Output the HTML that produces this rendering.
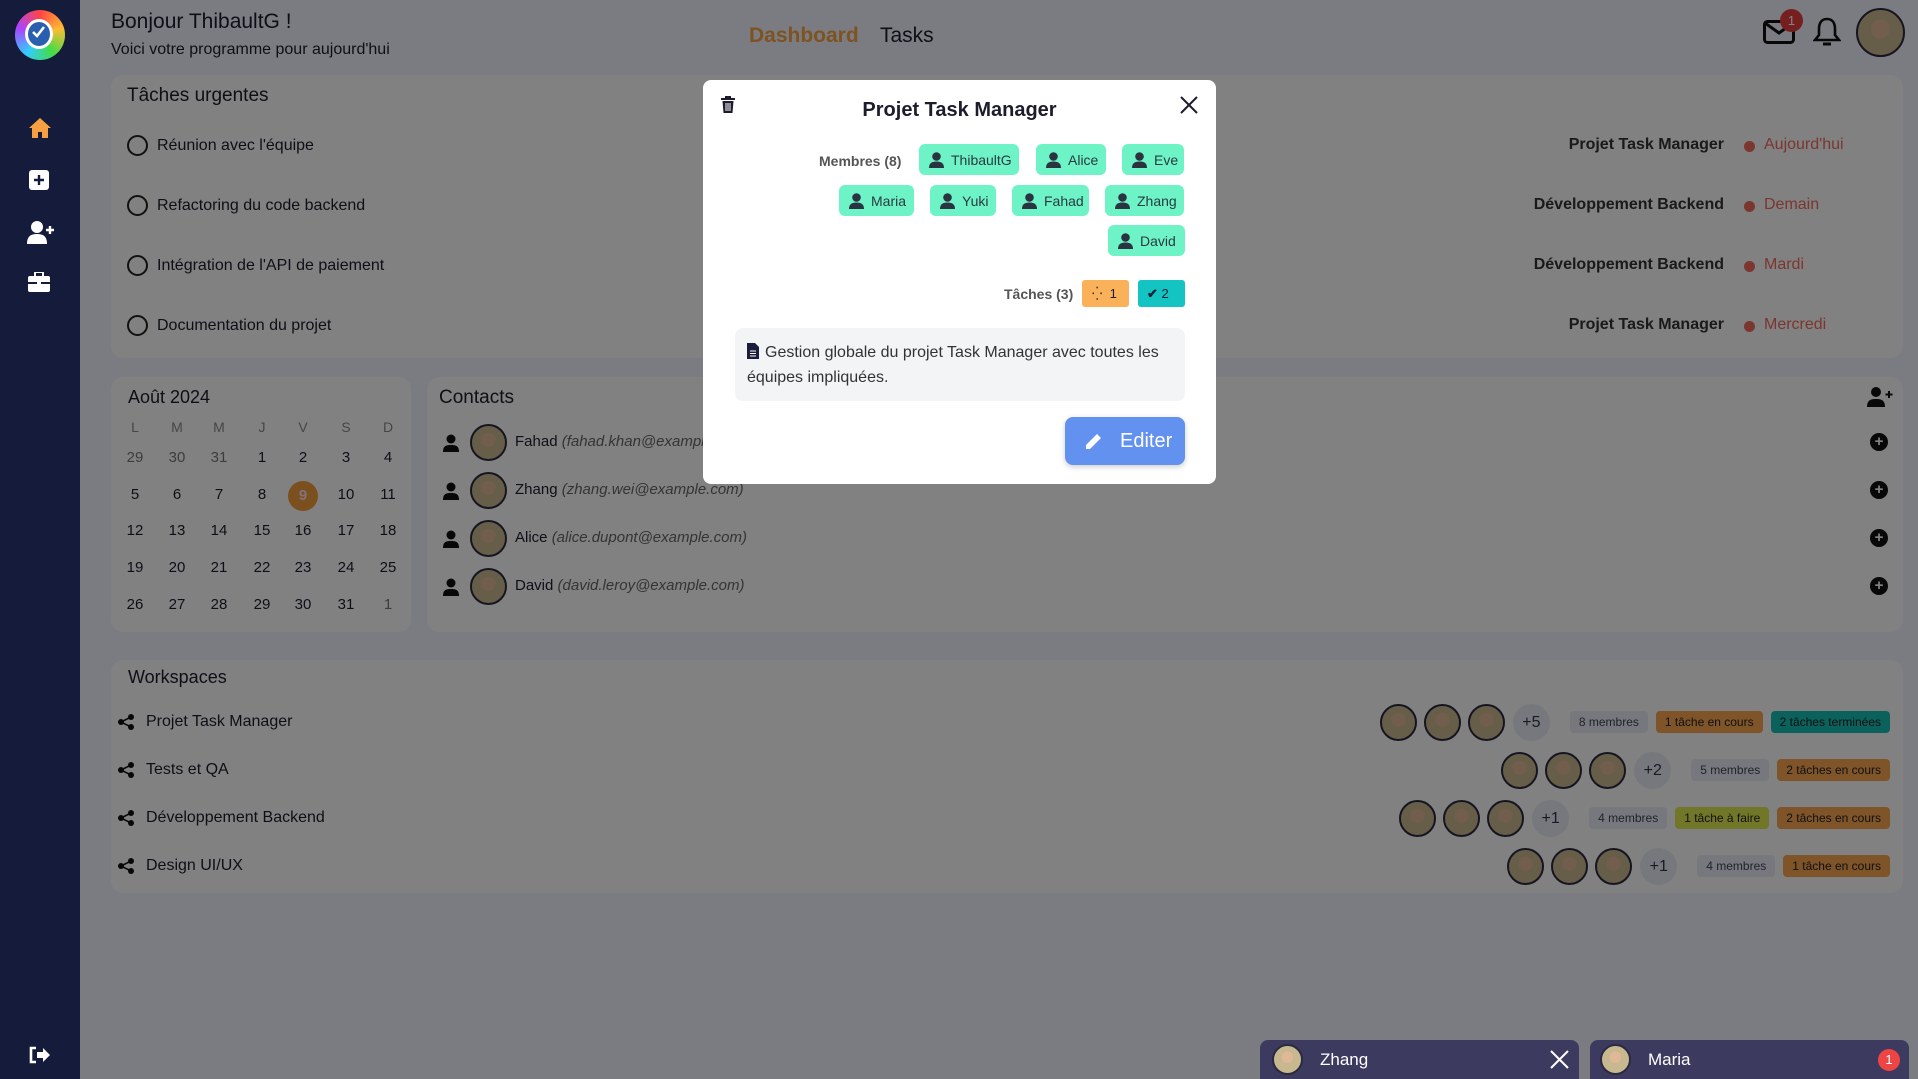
<!DOCTYPE html>
<html><head><meta charset="utf-8"><style>
*{box-sizing:border-box;margin:0;padding:0}
body{width:1918px;height:1079px;overflow:hidden;background:#eef1fb;font-family:"Liberation Sans",sans-serif;color:#1c1c2c;position:relative}
.a{position:absolute}
.card{position:absolute;background:#fbfbfb;border-radius:12px}
.sb{position:absolute;left:0;top:0;width:80px;height:1079px;background:#151c3b;z-index:5}
.ov{position:absolute;left:0;top:0;width:1918px;height:1079px;background:rgba(0,0,0,0.485);z-index:3}
.row{position:absolute;font-size:16px;display:flex;align-items:center}
.circ{width:21px;height:21px;border:2px solid #222;border-radius:50%;margin-right:9px}
.proj{position:absolute;right:194px;font-size:16px;font-weight:bold;color:#333}
.date{position:absolute;left:1764px;font-size:16px;color:#f06a5c}
.dot{position:absolute;left:1744px;width:11px;height:11px;border-radius:50%;background:#f06a5c}
.cal{position:absolute;font-size:15px;width:30px;text-align:center}
.av{border-radius:50%;border:2px solid #2a2a40;background:radial-gradient(circle at 50% 42%,#e0b898 0 27%,#c8b890 28% 100%)}
.badge{height:22px;line-height:22px;padding:0 9px;border-radius:4px;font-size:12px;margin-left:14px}
.plus{width:37px;height:37px;border-radius:50%;background:#e6e9f3;text-align:center;line-height:37px;font-size:16px;color:#334;margin-left:8px}
.modal{position:absolute;left:703px;top:80px;width:513px;height:404px;background:#fff;border-radius:8px;z-index:4}
.chip{position:absolute;height:31px;background:#6df3c5;border-radius:6px;font-size:14px;color:#2a3a40;display:flex;align-items:center;padding-left:10px}
.chip svg{margin-right:7px}
.tab{position:absolute;top:1040px;height:39px;background:#3d3a5f;border-radius:8px 8px 0 0;z-index:5;color:#fff;font-size:17px;display:flex;align-items:center}
</style></head><body>

<div class="sb">
 <div class="a" style="left:15px;top:10px;width:50px;height:50px;border-radius:50%;background:conic-gradient(#f44,#fb3,#4d4,#3cf,#a4f,#f44)"></div>
 <div class="a" style="left:25px;top:19px;width:28px;height:30px;border-radius:50%;background:#2a5fb0;border:3px solid #fff"></div>
 <svg class="a" style="left:31px;top:26px" width="14" height="12" viewBox="0 0 14 12"><path d="M2 6l4 4 7-9" stroke="#fff" stroke-width="2.5" fill="none"/></svg>
 <svg class="a" style="left:28px;top:117px" width="24" height="22" viewBox="0 0 24 22"><path d="M12 1L1 11h3v10h6v-6h4v6h6V11h3z" fill="#f5a142"/></svg>
 <svg class="a" style="left:29px;top:170px" width="20" height="20" viewBox="0 0 20 20"><rect width="20" height="20" rx="3" fill="#fff"/><path d="M10 5v10M5 10h10" stroke="#151c3b" stroke-width="2.4"/></svg>
 <svg class="a" style="left:27px;top:220px" width="28" height="24" viewBox="0 0 28 24"><circle cx="10" cy="7" r="6" fill="#fff"/><path d="M0 24c0-8 4-10 10-10s10 2 10 10z" fill="#fff"/><path d="M23 6v8M19 10h8" stroke="#fff" stroke-width="2.4"/></svg>
 <svg class="a" style="left:28px;top:272px" width="22" height="20" viewBox="0 0 22 20"><rect x="0" y="4" width="22" height="16" rx="2" fill="#fff"/><rect x="7" y="0" width="8" height="6" rx="1" fill="none" stroke="#fff" stroke-width="2"/><rect x="0" y="10" width="22" height="2" fill="#151c3b"/><rect x="9" y="9" width="4" height="4" fill="#fff"/></svg>
 <svg class="a" style="left:28px;top:1046px" width="22" height="18" viewBox="0 0 22 18"><path d="M8 2H3v14h5" stroke="#fff" stroke-width="2.6" fill="none"/><path d="M9 6h6V2l7 7-7 7v-4H9z" fill="#fff"/></svg>
</div>

<div class="a" style="left:111px;top:10px;font-size:21px">Bonjour ThibaultG !</div>
<div class="a" style="left:111px;top:41px;font-size:16px">Voici votre programme pour aujourd'hui</div>
<div class="a" style="left:749px;top:24px;font-size:21px;font-weight:bold;color:#f5a142">Dashboard</div>
<div class="a" style="left:880px;top:24px;font-size:21px">Tasks</div>
<svg class="a" style="left:1763px;top:20px" width="32" height="24" viewBox="0 0 32 24"><rect x="1.5" y="1.5" width="29" height="21" rx="3" fill="none" stroke="#111" stroke-width="3"/><path d="M2 3l14 10 14-10" fill="none" stroke="#111" stroke-width="3"/></svg>
<div class="a" style="left:1780px;top:9px;width:23px;height:23px;border-radius:50%;background:#e53e3e;color:#fff;font-size:13px;text-align:center;line-height:23px">1</div>
<svg class="a" style="left:1813px;top:16px" width="28" height="32" viewBox="0 0 28 32"><path d="M14 3c-6 0-8 5-8 10v6l-4 5h24l-4-5v-6c0-5-2-10-8-10z" fill="none" stroke="#111" stroke-width="2.6"/><path d="M10 28h8" stroke="#111" stroke-width="3"/></svg>
<div class="a av" style="left:1856px;top:8px;width:49px;height:49px"></div>

<div class="card" style="left:111px;top:75px;width:1792px;height:283px"></div>
<div class="a" style="left:127px;top:85px;font-size:19px">Tâches urgentes</div>
<div class="row" style="left:127px;top:135px"><div class="circ"></div>Réunion avec l'équipe</div>
<div class="row" style="left:127px;top:195px"><div class="circ"></div>Refactoring du code backend</div>
<div class="row" style="left:127px;top:255px"><div class="circ"></div>Intégration de l'API de paiement</div>
<div class="row" style="left:127px;top:315px"><div class="circ"></div>Documentation du projet</div>
<div class="proj" style="top:136px">Projet Task Manager</div><div class="dot" style="top:141px"></div><div class="date" style="top:136px">Aujourd'hui</div>
<div class="proj" style="top:196px">Développement Backend</div><div class="dot" style="top:201px"></div><div class="date" style="top:196px">Demain</div>
<div class="proj" style="top:256px">Développement Backend</div><div class="dot" style="top:261px"></div><div class="date" style="top:256px">Mardi</div>
<div class="proj" style="top:316px">Projet Task Manager</div><div class="dot" style="top:321px"></div><div class="date" style="top:316px">Mercredi</div>

<div class="card" style="left:111px;top:377px;width:300px;height:255px"></div>
<div class="a" style="left:128px;top:387px;font-size:18px">Août 2024</div>
<div id="cal"></div>

<div class="card" style="left:427px;top:377px;width:1476px;height:255px"></div>
<div class="a" style="left:439px;top:387px;font-size:19px">Contacts</div>
<svg class="a" style="left:1867px;top:387px" width="26" height="20" viewBox="0 0 26 20"><circle cx="9" cy="5" r="5" fill="#111"/><path d="M0 20c0-7 4-8 9-8s9 1 9 8z" fill="#111"/><path d="M22 4v7M18.5 7.5h7" stroke="#111" stroke-width="2"/></svg>
<div id="contacts"></div>

<div class="card" style="left:111px;top:660px;width:1792px;height:233px"></div>
<div class="a" style="left:128px;top:667px;font-size:18px">Workspaces</div>
<div id="ws"></div>

<div class="ov"></div>

<div class="modal">
 <svg class="a" style="left:18px;top:16px" width="14" height="17" viewBox="0 0 14 17"><rect x="0" y="2" width="14" height="2" fill="#1c1c2c"/><rect x="4" y="0" width="6" height="2" fill="#1c1c2c"/><path d="M1.5 5h11l-1 12h-9z" fill="#1c1c2c"/><path d="M5 7v8M7 7v8M9 7v8" stroke="#fff" stroke-width="1"/></svg>
 <div class="a" style="left:0;width:513px;top:19px;text-align:center;font-size:20px;font-weight:bold">Projet Task Manager</div>
 <svg class="a" style="left:476px;top:15px" width="20" height="20" viewBox="0 0 20 20"><path d="M2 2l16 16M18 2L2 18" stroke="#1c1c2c" stroke-width="2"/></svg>
 <div class="a" style="left:116px;top:73px;font-size:14px;font-weight:bold;color:#555">Membres (8)</div>
 <div id="chips"></div>
 <div class="a" style="left:301px;top:206px;font-size:14px;font-weight:bold;color:#555">Tâches (3)</div>
 <div class="a" style="left:379px;top:200px;width:47px;height:27px;background:#fbb15a;border-radius:3px;font-size:13px;line-height:27px;padding-left:10px">⁛&nbsp; 1</div>
 <div class="a" style="left:435px;top:200px;width:47px;height:27px;background:#14c4c2;border-radius:3px;font-size:13px;line-height:27px;padding-left:9px;color:#123"><b>✔</b> 2</div>
 <div class="a" style="left:32px;top:248px;width:450px;height:73px;background:#f2f4f6;border-radius:8px;padding:12px 12px;font-size:16px;line-height:25px;color:#333">
  <svg width="12" height="16" viewBox="0 0 12 16" style="vertical-align:-2px;margin-right:6px"><path d="M0 0h8l4 4v12H0z" fill="#1c1c3c"/><path d="M3 8h6M3 10.5h6M3 13h6" stroke="#fff" stroke-width="1"/></svg>Gestion globale du projet Task Manager avec toutes les équipes impliquées.</div>
 <div class="a" style="left:362px;top:337px;width:120px;height:48px;background:#6291ef;border-radius:8px;color:#fff;font-size:20px;line-height:48px;padding-left:55px;box-shadow:0 2px 6px rgba(0,0,0,.2)">Editer</div>
 <svg class="a" style="left:381px;top:352px" width="19" height="19" viewBox="0 0 19 19"><path d="M2 13L13 2l4 4L6 17H2z" fill="#fff"/></svg>
</div>

<div class="tab" style="left:1260px;width:319px">
 <div class="av" style="width:31px;height:31px;margin-left:12px;margin-right:17px"></div>Zhang
 <svg class="a" style="left:290px;top:10px" width="19" height="19" viewBox="0 0 19 19"><path d="M1 1l17 17M18 1L1 18" stroke="#fff" stroke-width="2"/></svg>
</div>
<div class="tab" style="left:1590px;width:319px">
 <div class="av" style="width:31px;height:31px;margin-left:10px;margin-right:17px"></div>Maria
 <div class="a" style="left:288px;top:9px;width:22px;height:22px;border-radius:50%;background:#ef4444;font-size:13px;text-align:center;line-height:22px">1</div>
</div>

<script>
var h='',cols=[135,177,219,262,303,346,388],rows=[459,496,532,569,606];
['L','M','M','J','V','S','D'].forEach(function(d,i){h+='<div class="cal" style="left:'+(cols[i]-15)+'px;top:419px;color:#888;font-size:14px">'+d+'</div>'});
var days=[29,30,31,1,2,3,4,5,6,7,8,9,10,11,12,13,14,15,16,17,18,19,20,21,22,23,24,25,26,27,28,29,30,31,1];
days.forEach(function(d,k){var r=Math.floor(k/7),c=k%7,grey=(k<3||k==34);
var st='left:'+(cols[c]-15)+'px;top:'+(rows[r]-10)+'px;color:'+(grey?'#777':'#1c1c2c');
if(k==11)st+=';background:#f29c3c;color:#fde;border-radius:50%;height:30px;top:'+(rows[r]-15)+'px;line-height:30px;font-weight:bold';
h+='<div class="cal" style="'+st+'">'+d+'</div>'});
document.getElementById('cal').innerHTML=h;
h='';var cs=[['Fahad','fahad.khan@example.com'],['Zhang','zhang.wei@example.com'],['Alice','alice.dupont@example.com'],['David','david.leroy@example.com']];
cs.forEach(function(c,i){var y=[442,490,538,586][i];
h+='<svg class="a" style="left:443px;top:'+(y-8)+'px" width="16" height="18" viewBox="0 0 16 18"><circle cx="8" cy="5" r="4.5" fill="#111"/><path d="M0 18c0-6 3-7 8-7s8 1 8 7z" fill="#111"/></svg>';
h+='<div class="a av" style="left:470px;top:'+(y-18)+'px;width:37px;height:37px"></div>';
h+='<div class="a" style="left:515px;top:'+(y-9)+'px;font-size:15px">'+c[0]+' <i style="color:#666">('+c[1]+')</i></div>';
h+='<div class="a" style="left:1870px;top:'+(y-9)+'px;width:18px;height:18px;border-radius:50%;background:#111;color:#fff;font-size:15px;font-weight:bold;text-align:center;line-height:18px">+</div>'});
document.getElementById('contacts').innerHTML=h;
h='';var ws=[['Projet Task Manager','+5','8 membres',[['1 tâche en cours','#f5a44e'],['2 tâches terminées','#17bdb3']]],
['Tests et QA','+2','5 membres',[['2 tâches en cours','#f5a44e']]],
['Développement Backend','+1','4 membres',[['1 tâche à faire','#dfe650'],['2 tâches en cours','#f5a44e']]],
['Design UI/UX','+1','4 membres',[['1 tâche en cours','#f5a44e']]]];
ws.forEach(function(w,i){var y=[722,770,818,866][i];
h+='<svg class="a" style="left:118px;top:'+(y-8)+'px" width="16" height="16" viewBox="0 0 16 16"><circle cx="13" cy="3" r="3" fill="#111"/><circle cx="3" cy="8" r="3" fill="#111"/><circle cx="13" cy="13" r="3" fill="#111"/><path d="M13 3L3 8l10 5" stroke="#111" stroke-width="1.6" fill="none"/></svg>';
h+='<div class="a" style="left:146px;top:'+(y-9)+'px;font-size:16px">'+w[0]+'</div>';
h+='<div class="a" style="right:28px;top:'+(y-20)+'px;height:40px;display:flex;align-items:center">';
for(var k=0;k<3;k++)h+='<div class="av" style="width:37px;height:37px;margin-left:7px"></div>';
h+='<div class="plus">'+w[1]+'</div><div class="badge" style="background:#e6e9f3;color:#445;margin-left:20px">'+w[2]+'</div>';
w[3].forEach(function(b){h+='<div class="badge" style="background:'+b[1]+';color:#222;margin-left:8px">'+b[0]+'</div>'});
h+='</div>'});
document.getElementById('ws').innerHTML=h;
h='';var ch=[['ThibaultG',216,64,100],['Alice',333,64,70],['Eve',419,64,62],['Maria',136,105,75],['Yuki',227,105,66],['Fahad',309,105,77],['Zhang',402,105,79],['David',405,145,77]];
ch.forEach(function(c){h+='<div class="chip" style="left:'+c[1]+'px;top:'+c[2]+'px;width:'+c[3]+'px"><svg width="15" height="16" viewBox="0 0 15 16"><circle cx="7.5" cy="4.5" r="4.3" fill="#2a3440"/><path d="M0 16c0-5 3-6.5 7.5-6.5S15 11 15 16z" fill="#2a3440"/></svg>'+c[0]+'</div>'});
document.getElementById('chips').innerHTML=h;
</script>
</body></html>
